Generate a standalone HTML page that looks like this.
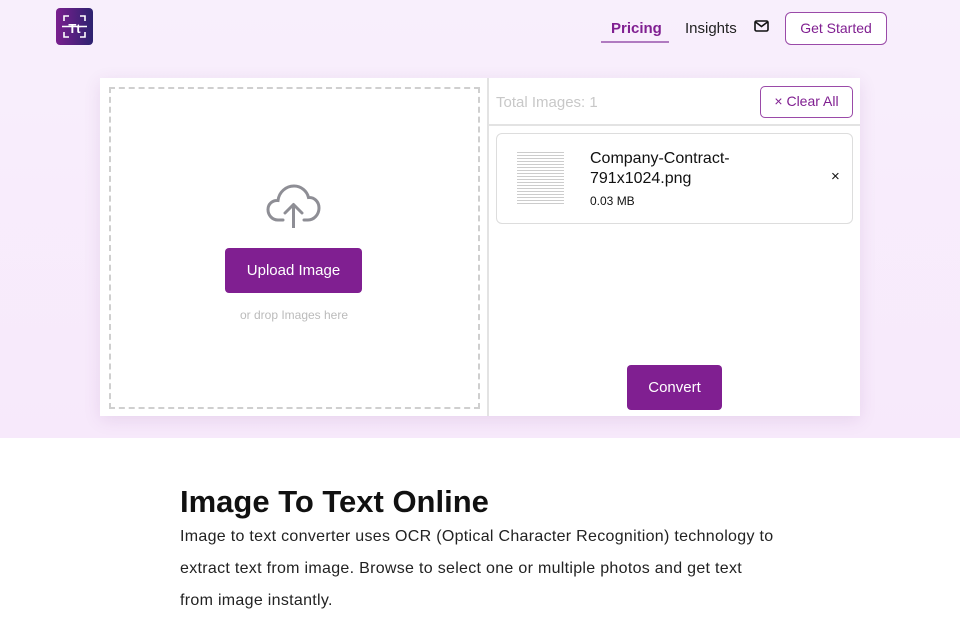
<!DOCTYPE html>
<html><head><style>
*{margin:0;padding:0;box-sizing:border-box}
body{width:960px;height:640px;overflow:hidden;font-family:"Liberation Sans",sans-serif;background:#fff;position:relative}
.hero{position:absolute;left:0;top:0;width:960px;height:438px;background:linear-gradient(#f8effc,#f7e9fb)}
.logo{position:absolute;left:56px;top:8px;width:37px;height:37px;border-radius:4px;background:linear-gradient(90deg,#7a1f8e,#2d2270)}
.nav{position:absolute;top:20px;font-size:15px}
.card{position:absolute;left:100px;top:78px;width:760px;height:338px;background:#fff;box-shadow:0 4px 16px rgba(120,60,140,.12)}
.drop{position:absolute;left:9px;top:9px;width:371px;height:322px;border:2px dashed #cfcfcf}
.divider{position:absolute;left:387px;top:0;width:2px;height:338px;background:#e3e3e3}
.btn{position:absolute;background:#801f91;color:#fff;border-radius:4px;text-align:center;font-size:15px}
</style></head><body>
<div class="hero"></div>
<div class="logo">
<svg width="37" height="37" viewBox="0 0 37 37"><g fill="none" stroke="#fff" stroke-width="1.6"><path d="M8 13V8h5M24 8h5v5M29 24v5h-5M13 29H8v-5"/><path d="M6 18.5h25"/></g><text x="18.5" y="25" font-family="Liberation Sans" font-weight="bold" font-size="13" fill="#fff" text-anchor="middle">Tt</text></svg>
</div>
<div class="nav" style="left:611px;color:#801f91;font-weight:bold">Pricing</div>
<div style="position:absolute;left:601px;top:41px;width:68px;height:2px;background:#b07ac0"></div>
<div class="nav" style="left:685px;color:#222">Insights</div>
<svg style="position:absolute;left:754px;top:20px" width="15" height="12" viewBox="0 0 15 12"><rect x="1" y="1" width="13" height="10" rx="1.5" fill="none" stroke="#111" stroke-width="1.6"/><path d="M1.5 2l6 4.5 6-4.5" fill="none" stroke="#111" stroke-width="1.6"/></svg>
<div style="position:absolute;left:785px;top:12px;width:102px;height:33px;border:1.5px solid #9a4aa8;border-radius:6px;color:#801f91;font-size:14px;text-align:center;line-height:30px;background:#fff">Get Started</div>
<div class="card">
 <div class="drop"></div>
 <svg style="position:absolute;left:166px;top:104px" width="56" height="46" viewBox="0 0 56 46"><path d="M17 38H12C6 38 2 33 2 27.5 2 22 6.5 18 12 18.5 13 10 20 4 28 4c7 0 13 5 14.5 11.5C48 15 53 19.5 53 26c0 6.5-5 12-11 12h-4" fill="none" stroke="#8e8e95" stroke-width="3" stroke-linecap="round"/><path d="M27.5 46V23M19 31l8.5-8.5L36 31" fill="none" stroke="#8e8e95" stroke-width="3" stroke-linecap="round" stroke-linejoin="round"/></svg>
 <div class="btn" style="left:125px;top:170px;width:137px;height:45px;line-height:45px;font-size:15px">Upload Image</div>
 <div style="position:absolute;left:100px;width:188px;top:230px;text-align:center;color:#bbb;font-size:12px">or drop Images here</div>
 <div class="divider"></div>
 <div style="position:absolute;left:396px;top:16px;color:#c8c8c8;font-size:15px">Total Images: 1</div>
 <div style="position:absolute;left:660px;top:8px;width:93px;height:32px;border:1.5px solid #9a4aa8;border-radius:5px;color:#801f91;font-size:14px;text-align:center;line-height:29px">× Clear All</div>
 <div style="position:absolute;left:389px;top:46px;width:371px;height:2px;background:#e3e3e3"></div>
 <div style="position:absolute;left:396px;top:55px;width:357px;height:91px;border:1.5px solid #ddd;border-radius:6px">
  <div style="position:absolute;left:20px;top:16px;width:47px;height:56px;background:repeating-linear-gradient(#fff 0 2px,#ccc 2px 3px)"></div>
  <div style="position:absolute;left:93px;top:15px;font-size:16px;line-height:20px;color:#111">Company-Contract-<br>791x1024.png</div>
  <div style="position:absolute;left:93px;top:60px;font-size:12px;color:#111">0.03 MB</div>
  <div style="position:absolute;left:334px;top:34px;font-size:15px;color:#111">×</div>
 </div>
 <div class="btn" style="left:527px;top:287px;width:95px;height:45px;line-height:45px">Convert</div>
</div>
<div style="position:absolute;left:180px;top:484px;font-size:31px;font-weight:bold;color:#111">Image To Text Online</div>
<div style="position:absolute;left:180px;top:521px;width:700px;white-space:nowrap;font-size:16px;letter-spacing:0.3px;line-height:32px;color:#222">Image to text converter uses OCR (Optical Character Recognition) technology to<br>extract text from image. Browse to select one or multiple photos and get text<br>from image instantly.</div>
</body></html>
